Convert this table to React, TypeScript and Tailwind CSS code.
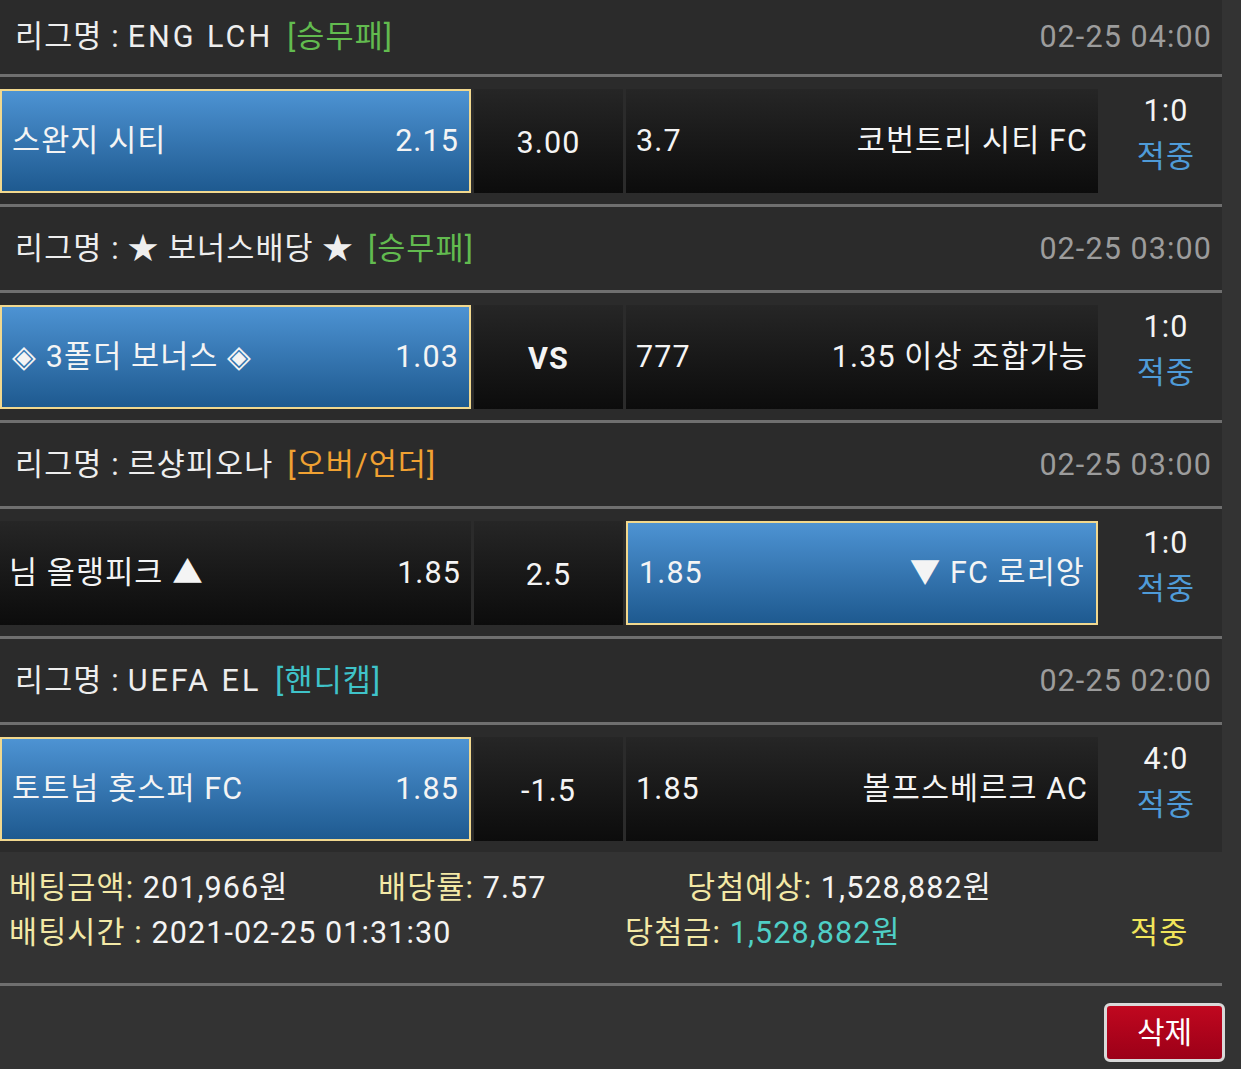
import React from "react";

const font = { fontFamily: 'Roboto, "Noto Sans CJK KR", sans-serif' };

function Sep() {
  return <div className="h-[3px] w-[1222px] bg-[#6f6f6f]" />;
}

function Header({ name, kind, kindColor, time, first, wide }: { name: string; kind: string; kindColor: string; time: string; first?: boolean; wide?: boolean }) {
  return (
    <div className={`flex w-[1222px] items-center justify-between pl-[15px] pr-[10px] ${first ? "h-[74px]" : "h-[83px]"}`}>
      <div className="flex items-center text-[#eeeeee]">
        <span>리그명 : </span>
        <span className={`ml-[8px] ${wide ? "tracking-[3px]" : ""}`}>{name}</span>
        <span className={`ml-[14px] ${kindColor}`}>{kind}</span>
      </div>
      <div className="text-[#9c9c9c]">{time}</div>
    </div>
  );
}

function Cell({ selected, width, children, className }: { selected?: boolean; width: string; children: React.ReactNode; className?: string }) {
  return (
    <div
      className={`flex h-[104px] shrink-0 items-center ${width} ${
        selected
          ? "border-2 border-[#f1d88e] bg-gradient-to-b from-[#4d93d3] to-[#1e5a90]"
          : "bg-gradient-to-b from-[#262626] to-[#0c0c0c]"
      } ${className ?? ""}`}
    >
      {children}
    </div>
  );
}

function Match({
  home, homeOdd, mid, awayOdd, away, score, sel, bold,
}: { home: string; homeOdd: string; mid: string; awayOdd: string; away: string; score: string; sel: "home" | "away"; bold?: boolean }) {
  return (
    <div className="flex h-[127px] w-[1222px] items-start pt-[12px]">
      <Cell selected={sel === "home"} width="w-[471px]" className={sel === "home" ? "justify-between pl-[10px] pr-[10px]" : "justify-between pl-[9px] pr-[10px]"}>
        <span className="text-[#f4f4f4]">{home}</span>
        <span className="text-[#f4f4f4]">{homeOdd}</span>
      </Cell>
      <Cell width="w-[149px] ml-[3px]" className="justify-center">
        <span className={`mt-[4px] text-[#f4f4f4] ${bold ? "font-bold" : ""}`}>{mid}</span>
      </Cell>
      <Cell selected={sel === "away"} width="w-[472px] ml-[3px]" className={sel === "away" ? "justify-between pl-[11px] pr-[11px]" : "justify-between pl-[10px] pr-[10px]"}>
        <span className="text-[#f4f4f4]">{awayOdd}</span>
        <span className="text-[#f4f4f4]">{away}</span>
      </Cell>
      <div className="flex h-[104px] w-[124px] flex-col items-center justify-center pl-[12px] pb-[14px] leading-[46px]">
        <span className="text-[#f4f4f4]">{score}</span>
        <span className="text-[#4f9bd8]">적중</span>
      </div>
    </div>
  );
}

export default function App() {
  return (
    <div className="h-[1069px] w-[1241px] overflow-hidden bg-[#333333] text-[30.5px] tracking-[1.1px]" style={font}>
      <div className="w-[1222px] bg-[#2b2b2b]">
        <Header first wide name="ENG LCH" kind="[승무패]" kindColor="text-[#62bb4f]" time="02-25 04:00" />
        <Sep />
        <Match home="스완지 시티" homeOdd="2.15" mid="3.00" awayOdd="3.7" away="코번트리 시티 FC" score="1:0" sel="home" />
        <Sep />
        <Header name="★ 보너스배당 ★" kind="[승무패]" kindColor="text-[#62bb4f]" time="02-25 03:00" />
        <Sep />
        <Match home="◈ 3폴더 보너스 ◈" homeOdd="1.03" mid="VS" bold awayOdd="777" away="1.35 이상 조합가능" score="1:0" sel="home" />
        <Sep />
        <Header name="르샹피오나" kind="[오버/언더]" kindColor="text-[#f0a132]" time="02-25 03:00" />
        <Sep />
        <Match home="님 올랭피크 ▲" homeOdd="1.85" mid="2.5" awayOdd="1.85" away="▼ FC 로리앙" score="1:0" sel="away" />
        <Sep />
        <Header wide name="UEFA EL" kind="[핸디캡]" kindColor="text-[#3fc3c9]" time="02-25 02:00" />
        <Sep />
        <Match home="토트넘 홋스퍼 FC" homeOdd="1.85" mid="-1.5" awayOdd="1.85" away="볼프스베르크 AC" score="4:0" sel="home" />
      </div>
      <div className="flex h-[131px] w-[1222px] flex-col justify-center pb-[16px] leading-[45px]">
        <div className="flex">
          <div className="w-[378px] pl-[9px]">
            <span className="text-[#f3e9a6]">베팅금액: </span>
            <span className="text-[#f4f4f4]">201,966원</span>
          </div>
          <div className="w-[309px]">
            <span className="text-[#f3e9a6]">배당률: </span>
            <span className="text-[#f4f4f4]">7.57</span>
          </div>
          <div>
            <span className="text-[#f3e9a6]">당첨예상: </span>
            <span className="text-[#f4f4f4]">1,528,882원</span>
          </div>
        </div>
        <div className="flex">
          <div className="w-[625px] pl-[9px]">
            <span className="text-[#f3e9a6]">배팅시간 : </span>
            <span className="text-[#f4f4f4]">2021-02-25 01:31:30</span>
          </div>
          <div className="w-[505px]">
            <span className="text-[#f3e9a6]">당첨금: </span>
            <span className="text-[#4fcfc6]">1,528,882원</span>
          </div>
          <div className="text-[#f1e55a]">적중</div>
        </div>
      </div>
      <Sep />
      <div className="flex justify-end pr-[16px] pt-[17px]">
        <button className="flex h-[59px] w-[121px] items-center justify-center rounded-[6px] border-[3px] border-[#d9d9d9] bg-gradient-to-b from-[#c0081f] to-[#9c0018] text-[30px] tracking-normal text-white">
          삭제
        </button>
      </div>
    </div>
  );
}
